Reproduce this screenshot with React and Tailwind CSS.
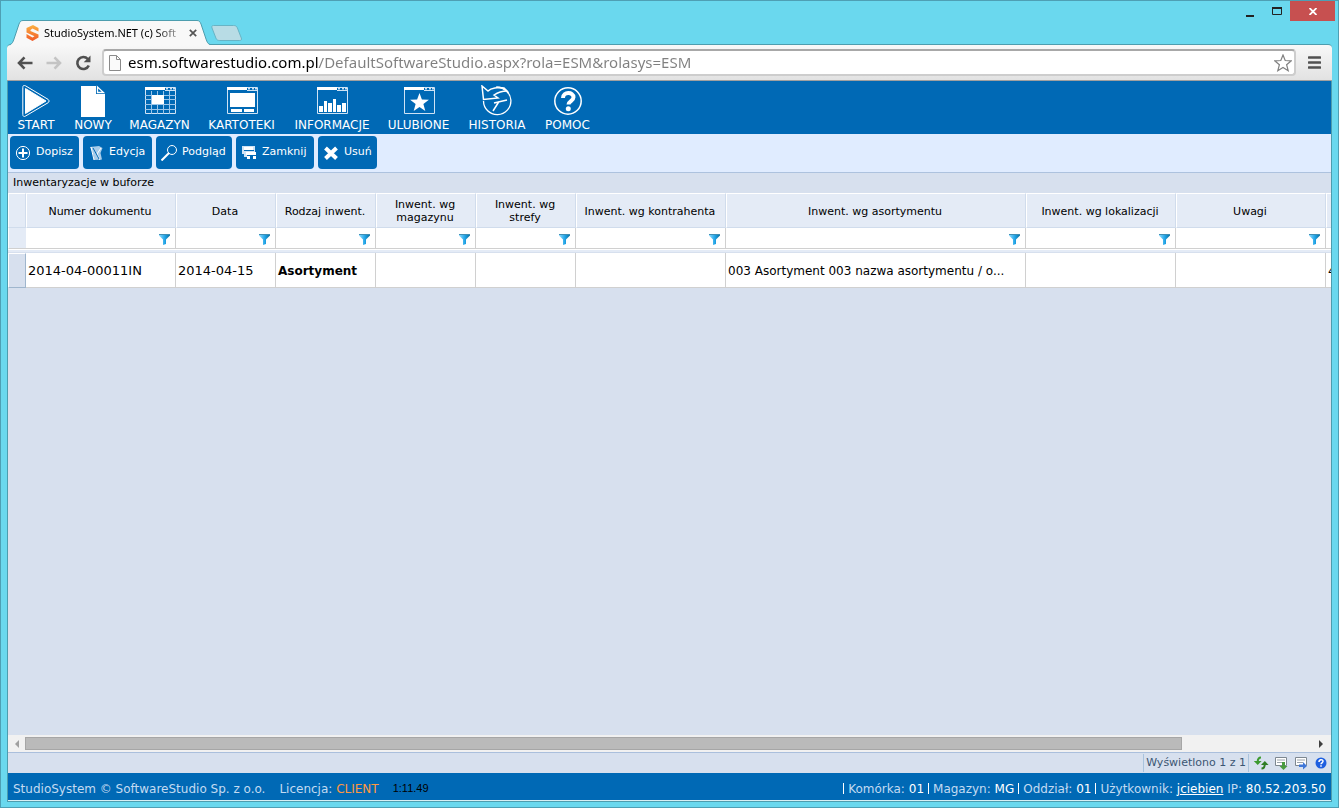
import { Fragment } from "react"

const columns = [
    { label: "Numer dokumentu", width: 150, value: "2014-04-00011IN" },
    { label: "Data", width: 100, value: "2014-04-15" },
    { label: "Rodzaj inwent.", width: 100, value: "Asortyment", style: "text-xs font-bold" },
    { label: "Inwent. wg magazynu", width: 100, value: "" },
    { label: "Inwent. wg strefy", width: 100, value: "" },
    { label: "Inwent. wg kontrahenta", width: 150, value: "" },
    { label: "Inwent. wg asortymentu", width: 300, value: "003 Asortyment 003 nazwa asortymentu / o...", style: "text-xs" },
    { label: "Inwent. wg lokalizacji", width: 150, value: "" },
    { label: "Uwagi", width: 150, value: "" },
    { label: "", width: 100, value: "4" },
]

const Window = ({ children }) => (
    <>
        <path d="M.5 .5h30v26H.5z" stroke="#cfe3f5" fill="none" />
        <path d="M0 0h20v3H0z" fill="#fff" />
        <path d="M20 3.5h11" stroke="#cfe3f5" />
        <path d="M21 1.5h2M25 1.5h2M28 1.5h2" stroke="#cfe3f5" strokeWidth="2" />
        {children}
    </>
)

const menu = [
    {
        label: "START",
        width: "w-[38px]",
        icon: (
            <>
                <path d="M5.500 .8C3.800 -.2 2.800 .8 2.800 2.600V29.400C2.800 31.400 4 32 5.600 31L28 17.800C29.400 17 29.400 15.200 28 14.300Z" fill="none" stroke="#fff" strokeWidth="1" />
                <path d="M5.500 3.500V28.500L26 16Z" fill="#fff" stroke="#fff" strokeLinejoin="round" />
            </>
        ),
    },
    {
        label: "NOWY",
        width: "w-[36px]",
        icon: (
            <>
                <path d="M4 1h15v8h9v23H4z" fill="#fff" />
                <path d="M20.500 2v5.500h6z" fill="none" stroke="#fff" strokeWidth="1.300" />
            </>
        ),
    },
    {
        label: "MAGAZYN",
        width: "w-[57px]",
        icon: (
            <g transform="translate(1 2)">
                <Window>
                    <path d="M6.500 4v23M12.500 4v23M18.500 4v23M24.500 4v23M0 8.500h31M0 12.500h31M0 17.500h31M0 22.500h31" stroke="#9cc6ea" />
                    <path d="M7 8h12v9H7z" fill="#fff" />
                </Window>
            </g>
        ),
    },
    {
        label: "KARTOTEKI",
        width: "w-[67px]",
        icon: (
            <g transform="translate(1 2)">
                <Window>
                    <path d="M3 6h25v14H3zM4 22h11v3H4zM17 22h10v3H17z" fill="#fff" />
                </Window>
            </g>
        ),
    },
    {
        label: "INFORMACJE",
        width: "w-[74px]",
        icon: (
            <g transform="translate(1 2)">
                <Window>
                    <path d="M2 19h4v6H2zM7 14h3v11H7zM11 16h4v9h-4zM16 12h3v13h-3zM20 18h4v7h-4zM25 16h4v9h-4z" fill="#fff" />
                </Window>
            </g>
        ),
    },
    {
        label: "ULUBIONE",
        width: "w-[59px]",
        icon: (
            <g transform="translate(1 2)">
                <Window>
                    <path d="M15.500 6l2.400 6.600 7 .2-5.500 4.300 1.900 6.900-5.800-4-5.800 4 1.900-6.900-5.500-4.300 7-.2z" fill="#fff" />
                </Window>
            </g>
        ),
    },
    {
        label: "HISTORIA",
        width: "w-[58px]",
        icon: (
            <g fill="none" stroke="#fff" strokeWidth="1.300">
                <path d="M2.500 16A13.700 13.700 0 1 0 15 2.300" />
                <path d="M15 2.300C20 2 24.500 4 27.500 8.500" />
                <path d="M1 1l1.500 13.500L17 13l-4-3c3-2 7-4 13-4l-3-3C17 2 10 3 7 6z" strokeWidth="1.500" />
                <path d="M26 15l-13 3M18 16.500l-6 9.500" strokeWidth="1.500" />
            </g>
        ),
    },
    {
        label: "POMOC",
        width: "w-[43px]",
        icon: (
            <>
                <circle cx="16" cy="16" r="13.200" fill="none" stroke="#fff" strokeWidth="1.500" />
                <path d="M11 13c0-6.500 10.500-6.500 10.500-.800 0 3.800-5 3.800-5 7.300" fill="none" stroke="#fff" strokeWidth="4" />
                <circle cx="16.300" cy="23.800" r="2.500" fill="#fff" />
            </>
        ),
    },
]

const actions = [
    {
        label: "Dopisz",
        width: "w-[69px]",
        icon: (
            <g fill="none" stroke="#fff">
                <circle cx="8" cy="8" r="6.600" />
                <path d="M8 3.500v9M3.500 8h9" strokeWidth="2" />
            </g>
        ),
    },
    {
        label: "Edycja",
        width: "w-[69px]",
        icon: (
            <>
                <path d="M2 2l9-1 3.500 2-2 5 1.500 6.500-8 .5C6 12 4.500 6 2 2z" fill="#a9cdea" />
                <path d="M3 2l3 13M13 3L9 9l3 6" stroke="#fff" fill="none" />
                <path d="M5 3l5 9 1 2" stroke="#0069b5" strokeWidth="1" fill="none" />
            </>
        ),
    },
    {
        label: "Podgląd",
        width: "w-[76px]",
        icon: (
            <g fill="none" stroke="#fff">
                <circle cx="11" cy="5" r="4.500" />
                <path d="M8 8L.5 15.500" strokeWidth="2" />
            </g>
        ),
    },
    {
        label: "Zamknij",
        width: "w-[78px]",
        icon: (
            <>
                <path d="M1 1h13v6H6v5H3V9H1z" fill="#cfe3f5" />
                <path d="M3 2h9v3H3zM5 7h10v3H5zM6 11h3v3H6zM12 11h3v3h-3z" fill="#fff" />
                <path d="M3 5.500h10" stroke="#0069b5" fill="none" />
            </>
        ),
    },
    {
        label: "Usuń",
        width: "w-[59px]",
        icon: <path d="M2.500 3l11 10.500M13.500 3l-11 10.500" stroke="#fff" strokeWidth="4" />,
    },
]

const session = [
    ["Komórka:", "01"],
    ["Magazyn:", "MG"],
    ["Oddział:", "01"],
]

function Funnel() {
    return (
        <svg viewBox="0 0 11 11" className="size-[11px]">
            <defs>
                <linearGradient id="funnel" x1="0" x2="1">
                    <stop offset="0" stopColor="#8fdcff" />
                    <stop offset=".55" stopColor="#1fa3e6" />
                    <stop offset="1" stopColor="#0a6c9c" />
                </linearGradient>
            </defs>
            <path d="M0 0h11v1.500L7 5.500V10L4 11V5.500L0 1.500z" fill="url(#funnel)" />
            <path d="M0 .5h11" stroke="#3f8fb5" />
        </svg>
    )
}

function TabStrip() {
    return (
        <div className="flex h-[43px] justify-between">
            <div className="flex items-end pl-[9px]">
                <div className="relative z-10 -mb-px flex h-[25px]">
                    <svg viewBox="0 0 13 25" className="h-[25px] w-[13px]">
                        <path d="M0 25C2 24 3 22 4 19L9 4C10 1.500 11 .5 13 .5V25z" fill="#f8f8f8" />
                        <path d="M0 24.500C2 24 3 22 4 19L9 4C10 1.500 11 .5 13 .5" fill="none" stroke="#4d9dae" />
                    </svg>
                    <div className="flex w-[174px] items-center border-t border-[#4d9dae] bg-[#f8f8f8] pl-[3px]">
                        <svg viewBox="0 0 13 16" className="mr-[5px] h-4 w-[13px] shrink-0">
                            <defs>
                                <linearGradient id="logo" x2="0" y2="1">
                                    <stop offset="0" stopColor="#fbb040" />
                                    <stop offset="1" stopColor="#f15a29" />
                                </linearGradient>
                            </defs>
                            <path d="M7 0l5.500 3v3.500L9.500 5 6.500 3.600 4.500 5v1l8 3.500v3L6.500 16 .5 12.800V9l6 3.500L8.500 11.200 .5 7.500V3z" fill="url(#logo)" />
                        </svg>
                        <span className="w-[139px] shrink-0 bg-[linear-gradient(90deg,#000_80%,#00000030)] bg-clip-text text-[11px] whitespace-nowrap text-transparent">StudioSystem.NET (c) Soft</span>
                        <button aria-label="Zamknij kartę" className="ml-[6px]">
                            <svg viewBox="0 0 8 8" className="size-2"><path d="M.8.8l6.400 6.400M7.200.8L.8 7.200" stroke="#555" strokeWidth="1.700" /></svg>
                        </button>
                    </div>
                    <svg viewBox="0 0 13 25" className="h-[25px] w-[13px]">
                        <path d="M13 25C11 24 10 22 9 19L4 4C3 1.500 2 .5 0 .5V25z" fill="#f8f8f8" />
                        <path d="M13 24.500C11 24 10 22 9 19L4 4C3 1.500 2 .5 0 .5" fill="none" stroke="#4d9dae" />
                    </svg>
                </div>
                <button aria-label="Nowa karta" className="mb-[3px]">
                    <svg viewBox="0 0 32 16" className="h-4 w-8">
                        <path d="M3.500.5h20c2 0 3 .5 3.800 2.200l4 10.300c.5 1.500.2 2.500-1.500 2.500h-20c-2 0-3-.5-3.800-2.200L2 3C1.500 1.500 1.800.5 3.500.5z" fill="#b8dce5" stroke="#68b4c5" />
                    </svg>
                </button>
            </div>

            <div className="flex items-start pr-[3px]">
                <button aria-label="Minimalizuj" className="flex h-5 w-[26px] items-center justify-center pt-[3px]">
                    <svg viewBox="0 0 8 8" className="size-2"><path d="M0 7h8" stroke="#222" strokeWidth="2" /></svg>
                </button>
                <button aria-label="Maksymalizuj" className="flex h-5 w-[27px] items-center justify-center">
                    <svg viewBox="0 0 10 8" className="h-2 w-[10px]"><path d="M.5 1h9v6.500h-9z" stroke="#222" fill="none" /><path d="M0 1h10" stroke="#222" strokeWidth="2" /></svg>
                </button>
                <button aria-label="Zamknij okno" className="flex h-5 w-[45px] items-center justify-center bg-[#c75050]">
                    <svg viewBox="0 0 8 7" className="h-[7px] w-2"><path d="M.5 0l7 7M7.500 0l-7 7" stroke="#fff" strokeWidth="1.800" /></svg>
                </button>
            </div>
        </div>
    )
}

function AddressBar() {
    return (
        <div className="flex h-[37px] shrink-0 items-center rounded-t border-y border-t-[#4d9dae] border-b-[#a0a0a0] bg-linear-to-b from-[#f8f8f8] to-[#e2e2e2] pr-[11px] pl-[10px]">
            <button aria-label="Wstecz" className="mr-[13px]">
                <svg viewBox="0 0 16 14" className="h-[14px] w-4"><path d="M15.500 7H2M7.500 1.300L2 7l5.500 5.700" fill="none" stroke="#505050" strokeWidth="2.600" /></svg>
            </button>
            <button aria-label="Dalej" className="mr-[13px]">
                <svg viewBox="0 0 16 14" className="h-[14px] w-4"><path d="M.5 7H14M8.500 1.300L14 7l-5.500 5.700" fill="none" stroke="#c4c4c4" strokeWidth="2.600" /></svg>
            </button>
            <button aria-label="Odśwież" className="mr-[11px]">
                <svg viewBox="0 0 16 16" className="size-4">
                    <path d="M12.800 4A6 6 0 1 0 13.800 10.500" fill="none" stroke="#505050" strokeWidth="2.600" />
                    <path d="M15.500.5v6.800H8.700z" fill="#505050" />
                </svg>
            </button>
            <div className="flex h-[27px] flex-1 items-center rounded-sm border-2 border-[#cdcdcd] border-t-[#a8a8a8] bg-white pr-[2px] pl-[5px]">
                <svg viewBox="0 0 12 16" className="mr-[7px] h-4 w-3"><path d="M.5.5h7l4 4v11H.5zM7.500.5v4h4" fill="#fafafa" stroke="#8a8a8a" /></svg>
                <input
                    aria-label="Adres"
                    defaultValue="esm.softwarestudio.com.pl/DefaultSoftwareStudio.aspx?rola=ESM&rolasys=ESM"
                    className="min-w-0 flex-1 bg-[linear-gradient(90deg,#000_191px,#808080_191px)] bg-clip-text pb-[2px] text-[15px] leading-5 text-transparent outline-none"
                />
                <button aria-label="Dodaj do zakładek">
                    <svg viewBox="0 0 18 18" className="size-[18px]"><path d="M9 1l2.200 5.500 6.100.3-4.700 3.900 1.600 6L9 13.400l-5.200 3.300 1.600-6L.7 6.800l6.100-.3z" fill="#fff" stroke="#808080" strokeWidth="1.200" /></svg>
                </button>
            </div>
            <button aria-label="Menu" className="ml-3">
                <svg viewBox="0 0 13 13" className="size-[13px]"><path d="M1 1.500h11M1 6.500h11M1 11.500h11" stroke="#505050" strokeWidth="2.600" strokeLinecap="round" /></svg>
            </button>
        </div>
    )
}

function Grid() {
    return (
        <div className="min-h-0 flex-1 overflow-hidden">
            <table className="w-[1418px] table-fixed border-separate border-spacing-0">
                <colgroup>
                    <col className="w-[18px]" />
                    {columns.map((c, i) => <col key={i} style={{ width: c.width }} />)}
                </colgroup>
                <thead>
                    <tr className="h-[35px] bg-[#e4ebf6] text-[11px] leading-[13px]">
                        <td className="border border-white border-r-[#d0dcec] border-b-[#d0dcec]"></td>
                        {columns.map((c, i) => (
                            <th key={i} className="border border-white border-r-[#d0dcec] border-b-[#d0dcec] pt-px pr-[6px] pb-0 pl-1 font-normal">{c.label}</th>
                        ))}
                    </tr>
                    <tr className="h-[21px] bg-white">
                        <td className="border border-white border-t-0 border-r-0 border-b-[#d0d0d0] bg-[#e4ebf6]"></td>
                        {columns.map((c, i) => (
                            <td key={i} className="border-r border-b border-[#d0d0d0] p-0">
                                <div className="flex items-center pr-[5px]">
                                    <input aria-label={"Filtr: " + c.label} className="h-4 min-w-0 flex-1 px-1 text-[11px] outline-none" />
                                    <button aria-label={"Filtruj: " + c.label} className="pt-[3px]"><Funnel /></button>
                                </div>
                            </td>
                        ))}
                    </tr>
                </thead>
                <tbody>
                    <tr className="h-1">
                        <td colSpan={11} className="border-t border-b border-t-white border-b-[#d7e0ee] bg-[#e4ebf6] p-0"></td>
                    </tr>
                    <tr className="h-[35px] bg-white">
                        <td className="border border-white border-r-[#9fb6cd] border-b-[#9fb6cd] bg-[#d7e0ee]"></td>
                        {columns.map((c, i) => (
                            <td key={i} className={"truncate border-r border-b border-[#d0d0d0] pt-px pr-[6px] pb-0 pl-[2px] " + (c.style || "text-[13px]")}>{c.value}</td>
                        ))}
                    </tr>
                </tbody>
            </table>
        </div>
    )
}

function ScrollBar() {
    return (
        <div className="flex h-[17px] shrink-0 items-center bg-[#f1f1f1]">
            <button aria-label="Przewiń w lewo" className="flex w-[17px] justify-center">
                <svg viewBox="0 0 4 8" className="h-2 w-1"><path d="M4 0v8L0 4z" fill="#a0a0a0" /></svg>
            </button>
            <div className="flex flex-1">
                <div className="h-[13px] w-[90%] border border-[#a6a6a6] bg-[#bababa]"></div>
            </div>
            <button aria-label="Przewiń w prawo" className="flex w-5 justify-center">
                <svg viewBox="0 0 4 8" className="h-2 w-1"><path d="M0 0v8l4-4z" fill="#404040" /></svg>
            </button>
        </div>
    )
}

function Pager() {
    return (
        <div className="flex h-[21px] shrink-0 items-center justify-end gap-1 border-t border-[#aabfdc] pr-[2px] text-[11px] text-[#3b5673]">
            <span className="border-x border-[#a9c3dd] px-[2px] leading-[18px]">Wyświetlono 1 z 1</span>
            <button aria-label="Odśwież listę">
                <svg viewBox="0 0 16 16" className="size-4">
                    <path d="M8 2.500C5.500 2.500 4.700 4 4.700 7" fill="none" stroke="#3d9a30" strokeWidth="2" />
                    <path d="M.8 6h7.800L4.700 10z" fill="#3d9a30" />
                    <path d="M8.500 13.500c2.500 0 3.300-1.500 3.300-4.500" fill="none" stroke="#2f7d25" strokeWidth="2" />
                    <path d="M8 10h7.600l-3.800-4z" fill="#2f7d25" />
                </svg>
            </button>
            <button aria-label="Eksportuj">
                <svg viewBox="0 0 16 16" className="size-4">
                    <path d="M2.500 2.500h11v8h-11z" fill="#fff" stroke="#7d8790" />
                    <path d="M4 5h8M4 7.500h6" stroke="#9aa3ab" />
                    <path d="M9 7h3v4h2.500l-4 4-4-4H9z" fill="#4a9b3f" />
                </svg>
            </button>
            <button aria-label="Układ kolumn">
                <svg viewBox="0 0 16 16" className="size-4">
                    <path d="M2.500 2.500h11v8h-11z" fill="#fff" stroke="#7d8790" />
                    <path d="M4 5h8M4 7.500h6" stroke="#9aa3ab" />
                    <path d="M6 9.500h4V7l4 4-4 3.500V12H6z" fill="#3f77d8" />
                </svg>
            </button>
            <button aria-label="Pomoc">
                <svg viewBox="0 0 16 16" className="size-4">
                    <circle cx="8" cy="8" r="5.500" fill="#1e5fe0" />
                    <path d="M6 7c0-3 4-3 4-.7 0 1.500-2 1.500-2 2.900M8 10.200v1.500" fill="none" stroke="#fff" strokeWidth="1.500" />
                </svg>
            </button>
        </div>
    )
}

export default function App() {
    return (
        <div className="flex h-screen flex-col border border-[#4e9fb4] bg-[#6ad8ee] font-['Noto_Sans',sans-serif]">
            <TabStrip />
            <div className="mx-[6px] mb-[5px] flex min-h-0 flex-1 flex-col">
                <AddressBar />
                <div className="flex min-h-0 flex-1 flex-col border border-t-0 border-[#4d9dae] bg-[#d7e0ee] font-['DejaVu_Sans',sans-serif] text-black">
                    <nav className="flex h-[53px] shrink-0 gap-5 bg-[#0069b5] pt-1 pl-[9px]">
                        {menu.map((m) => (
                            <a key={m.label} href="#" className={"flex flex-col items-center text-xs leading-4 whitespace-nowrap text-white " + m.width}>
                                <svg viewBox="0 0 32 32" className="size-8 shrink-0">{m.icon}</svg>
                                {m.label}
                            </a>
                        ))}
                    </nav>

                    <div className="flex h-[39px] shrink-0 gap-1 border-b border-[#adc2de] bg-[#e0ecff] pt-[2px] pl-[2px]">
                        {actions.map((a) => (
                            <button key={a.label} className={"flex h-[33px] items-center gap-[5px] rounded bg-[#0069b5] px-[5px] text-[11px] text-white " + a.width}>
                                <svg viewBox="0 0 16 16" className="size-4 shrink-0">{a.icon}</svg>
                                <span>{a.label}</span>
                            </button>
                        ))}
                    </div>

                    <h1 className="h-5 shrink-0 pl-[5px] text-[11px] leading-[19px]">Inwentaryzacje w buforze</h1>
                    <Grid />
                    <ScrollBar />
                    <Pager />

                    <footer className="flex h-7 shrink-0 items-center justify-between border-b border-[#d7f0f5] bg-[#0069b5] px-[5px] pt-1 text-xs text-[#c3dbf2]">
                        <div className="flex items-center gap-[14px]">
                            <span>StudioSystem © SoftwareStudio Sp. z o.o.</span>
                            <span>Licencja: <span className="text-[#ff9840]">CLIENT</span></span>
                            <time className="font-['Liberation_Sans',sans-serif] text-[11px] text-black">1:11.49</time>
                        </div>
                        <div className="flex items-center gap-1">
                            {session.map(([name, value]) => (
                                <Fragment key={name}>
                                    <span className="h-[11px] w-px bg-white"></span>
                                    <span>{name} <span className="text-white">{value}</span></span>
                                </Fragment>
                            ))}
                            <span className="h-[11px] w-px bg-white"></span>
                            <span>Użytkownik: <a href="#" className="text-white underline">jciebien</a> IP: <span className="text-white">80.52.203.50</span></span>
                        </div>
                    </footer>
                </div>
            </div>
        </div>
    )
}
